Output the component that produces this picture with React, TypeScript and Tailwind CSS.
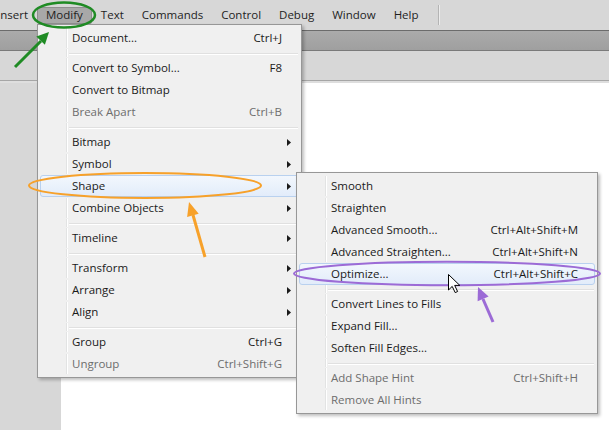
import React from "react";

type Item =
  | { label: string; shortcut?: string; sub?: boolean; disabled?: boolean; active?: boolean }
  | "sep";

const mainItems: Item[] = [
  { label: "Document...", shortcut: "Ctrl+J" },
  "sep",
  { label: "Convert to Symbol...", shortcut: "F8" },
  { label: "Convert to Bitmap" },
  { label: "Break Apart", shortcut: "Ctrl+B", disabled: true },
  "sep",
  { label: "Bitmap", sub: true },
  { label: "Symbol", sub: true },
  { label: "Shape", sub: true, active: true },
  { label: "Combine Objects", sub: true },
  "sep",
  { label: "Timeline", sub: true },
  "sep",
  { label: "Transform", sub: true },
  { label: "Arrange", sub: true },
  { label: "Align", sub: true },
  "sep",
  { label: "Group", shortcut: "Ctrl+G" },
  { label: "Ungroup", shortcut: "Ctrl+Shift+G", disabled: true },
];

const shapeItems: Item[] = [
  { label: "Smooth" },
  { label: "Straighten" },
  { label: "Advanced Smooth...", shortcut: "Ctrl+Alt+Shift+M" },
  { label: "Advanced Straighten...", shortcut: "Ctrl+Alt+Shift+N" },
  { label: "Optimize...", shortcut: "Ctrl+Alt+Shift+C", active: true },
  "sep",
  { label: "Convert Lines to Fills" },
  { label: "Expand Fill..." },
  { label: "Soften Fill Edges..." },
  "sep",
  { label: "Add Shape Hint", shortcut: "Ctrl+Shift+H", disabled: true },
  { label: "Remove All Hints", disabled: true },
];

const menuBar = ["Insert", "Modify", "Text", "Commands", "Control", "Debug", "Window", "Help"];

function Menu({ items, className }: { items: Item[]; className: string }) {
  return (
    <div className={`absolute border border-[#979797] bg-[#f0f0f0] p-[2px] shadow-[2px_2px_3px_rgba(0,0,0,0.25)] ${className}`}>
      {items.map((it, i) =>
        it === "sep" ? (
          <div key={i} className="flex h-[8px]">
            <div className="w-[27px] shrink-0 border-r border-[#e2e3e3] shadow-[1px_0_0_#fff]" />
            <div className="flex flex-1 items-center pl-[2px] pr-[1px]">
              <div className="h-px w-full bg-[#e0e0e0] shadow-[0_1px_0_#fff]" />
            </div>
          </div>
        ) : (
          <div
            key={i}
            className={`flex h-[22px] items-center rounded-[3px] border ${
              it.active
                ? "border-[#b9d1ef] bg-gradient-to-b from-[#f2f7fd] to-[#e2ecfa]"
                : "border-transparent"
            }`}
          >
            <div
              className={`h-full w-[26px] shrink-0 border-r ${
                it.active ? "border-transparent" : "border-[#e2e3e3] shadow-[1px_0_0_#fff]"
              }`}
            />
            <span className={`flex-1 pl-[5px] ${it.disabled ? "text-[#6d6d6d]" : "text-[#1a1a1a]"}`}>
              {it.label}
            </span>
            {it.shortcut && (
              <span className={it.disabled ? "text-[#6d6d6d]" : "text-[#1a1a1a]"}>{it.shortcut}</span>
            )}
            <div className="flex w-[16px] shrink-0 items-center pl-[5px]">
              {it.sub && (
                <svg width="4" height="7" viewBox="0 0 4 7">
                  <path d="M0 0L4 3.5L0 7z" fill="#1a1a1a" />
                </svg>
              )}
            </div>
          </div>
        )
      )}
    </div>
  );
}

export default function App() {
  return (
    <div className="relative flex h-[430px] w-[609px] flex-col overflow-hidden bg-white font-['Open_Sans',sans-serif] text-[11.5px] leading-none">
      {/* menu bar */}
      <div className="flex h-[30px] shrink-0 items-center bg-[#d7d7d7] text-[#1e1e1e]">
        <div className="-ml-[12px] flex items-center">
          {menuBar.map((m) => (
            <div
              key={m}
              className={`flex h-[17px] items-center rounded-[2px] border px-[8px] ${
                m === "Modify" ? "border-[#8e8e8e] bg-[#a8a8a8]" : "border-transparent"
              }`}
            >
              {m}
            </div>
          ))}
        </div>
        <div className="ml-[10px] h-[20px] w-px bg-[#b4b4b4] shadow-[1px_0_0_#ececec]" />
      </div>

      {/* toolbar strip */}
      <div className="h-[21px] shrink-0 border-y border-t-[#6c6c6c] border-b-[#7a7a7a] bg-gradient-to-b from-[#ababab] to-[#9f9f9f]" />
      <div className="h-[30px] shrink-0 border-b border-[#a6a6a6] bg-[#d7d7d7]" />
      <div className="h-[2px] shrink-0 bg-[#dedede]" />

      {/* body */}
      <div className="flex flex-1">
        <div className="w-[61px] bg-[#d7d7d7]" />
        <div className="flex-1 bg-white" />
      </div>

      <Menu items={mainItems} className="left-[37px] top-[24px] w-[265px]" />
      <Menu items={shapeItems} className="left-[296px] top-[172px] w-[302px]" />

      {/* annotations */}
      <svg className="pointer-events-none absolute inset-0" width="609" height="430" viewBox="0 0 609 430">
        <ellipse cx="64" cy="15" rx="31" ry="12.5" fill="none" stroke="#1f8b24" strokeWidth="2.5" />
        <line x1="15" y1="67" x2="41" y2="41" stroke="#1f8b24" strokeWidth="3" />
        <path d="M49 32L44.9 44.8L36.3 36.4z" fill="#1f8b24" />

        <ellipse cx="145" cy="185.5" rx="116" ry="12.5" fill="none" stroke="#f7a12a" strokeWidth="2" />
        <line x1="205" y1="257" x2="193" y2="215" stroke="#f7a12a" strokeWidth="3" />
        <path d="M189 202L198.7 213.7L187.1 217.1z" fill="#f7a12a" />

        <ellipse cx="447" cy="273.5" rx="153" ry="11.8" fill="none" stroke="#9c6bd6" strokeWidth="2" />
        <line x1="493" y1="322" x2="483" y2="299" stroke="#9c6bd6" strokeWidth="3" />
        <path d="M478 287L488.6 296.5L477.6 301.3z" fill="#9c6bd6" />

        <path
          d="M448.5 274.5L448.5 290L452.2 286.4L455.2 292.6L457.6 291.5L454.7 285.4L459.8 285.4Z"
          fill="#fff"
          stroke="#000"
          strokeWidth="1"
          strokeLinejoin="round"
        />
      </svg>
    </div>
  );
}
